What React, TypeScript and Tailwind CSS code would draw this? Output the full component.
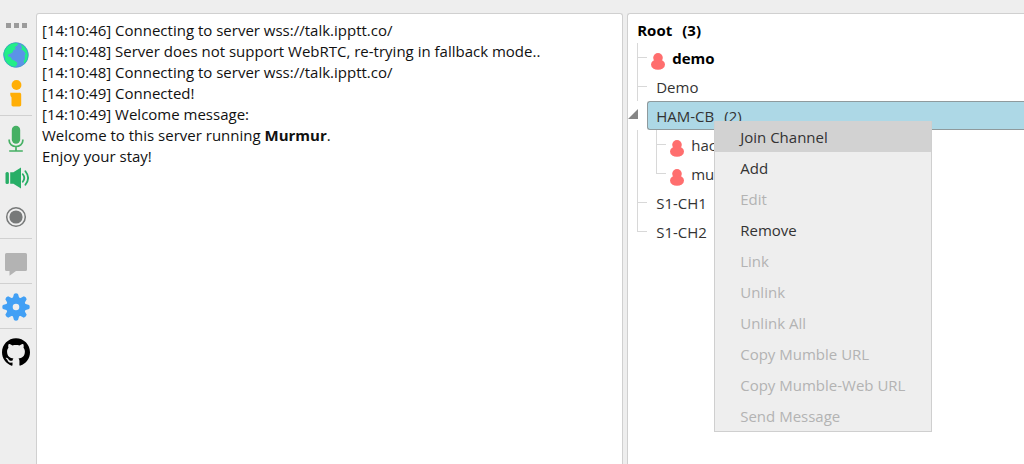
import type { ReactNode } from "react";
import clsx from "clsx";
import { SiGithub } from "react-icons/si";

/* ---------- icons ---------- */

function GlobeIcon() {
  return (
    <svg width="26" height="26" viewBox="0 0 26 26">
      <circle cx="13" cy="13" r="12.5" fill="#5b93e8" />
      <path
        d="M3.200 5.200C5.600 2.400 9 .8 12.500.7l3 .8-1.500 2.200-2.500 1.500 1.500 1.800-2.500 1-1 2.500-2.700 1.500-2 .7.500 1.800 2.500.8 1 2.200 3 1.200 2.700 2.300-1 2.500-2 1.700c-4-.5-7.500-3-9.300-6.200l-.2-3.500L.5 13C.6 10 1.500 7.300 3.200 5.200z"
        fill="#22ee88"
      />
      <path
        d="M17.500 2.200c3 1.200 5.300 3.600 6.600 6.600.9 2.400 1.200 5 .6 7.500-.6 2.200-1.700 4-3.200 5.500l-1-2.600 1.600-2.900-.6-2.500 1.200-2.200-2.200-2.800-2.400-1.200 1-2.400z"
        fill="#22ee88"
      />
      <circle cx="13" cy="13" r="12.300" fill="none" stroke="#3a9bc0" strokeWidth="0.600" />
    </svg>
  );
}

function InfoIcon() {
  return (
    <svg width="12" height="27" viewBox="0 0 12 27" fill="#ffae06">
      <circle cx="6.500" cy="5" r="4.900" />
      <path d="M.3 12.700h9.200c1 0 1.700.7 1.700 1.700v10.400c0 1-.7 1.700-1.700 1.700H3.200c-1 0-1.700-.7-1.700-1.700v-7.600C.5 16.400.1 14.800.3 12.700z" />
    </svg>
  );
}

function MicIcon() {
  return (
    <svg width="16" height="28" viewBox="0 0 16 28">
      <rect x="3.800" y="0.800" width="8.400" height="18" rx="4.200" fill="#46b064" />
      <path d="M1.200 14.500v1.200a6.800 5.800 0 0 0 13.600 0v-1.200M8 21.500v4M1.200 26h13.600" fill="none" stroke="#46b064" strokeWidth="1.700" />
    </svg>
  );
}

function SpeakerIcon() {
  return (
    <svg width="26" height="22" viewBox="0 0 26 22">
      <rect x="2.500" y="5" width="3.400" height="12" rx="1.500" fill="#27ae66" />
      <path d="M7.200 5.200h3.200L18 .4v21.200l-7.600-4.800H7.200z" fill="#27ae66" />
      <path d="M19.800 7.200c1.800 2.300 1.800 5.300 0 7.600M22.400 4.200c3.400 4.300 3.400 9.300 0 13.600" fill="none" stroke="#27ae66" strokeWidth="1.800" strokeLinecap="round" />
    </svg>
  );
}

function RecordIcon() {
  return (
    <svg width="22" height="22" viewBox="0 0 22 22">
      <circle cx="11" cy="11" r="9.300" fill="none" stroke="#777979" strokeWidth="1.500" />
      <circle cx="11" cy="11" r="6.600" fill="#777979" />
    </svg>
  );
}

function CommentIcon() {
  return (
    <svg width="22" height="23" viewBox="0 0 22 23">
      <path d="M1.500 0h19a1.500 1.500 0 0 1 1.500 1.500v15a1.500 1.500 0 0 1-1.500 1.500H11l-6.500 4.700V18h-3A1.500 1.500 0 0 1 0 16.500v-15A1.500 1.500 0 0 1 1.500 0z" fill="#b3b3b3" />
    </svg>
  );
}

function GearIcon() {
  return (
    <svg width="28" height="28" viewBox="0 0 28 28">
      <g fill="#42a0f5">
        <path id="tooth" d="M10.500 6 12 .9Q14 -.3 16 .9L17.500 6z" />
        <use href="#tooth" transform="rotate(45 14 14)" />
        <use href="#tooth" transform="rotate(90 14 14)" />
        <use href="#tooth" transform="rotate(135 14 14)" />
        <use href="#tooth" transform="rotate(180 14 14)" />
        <use href="#tooth" transform="rotate(225 14 14)" />
        <use href="#tooth" transform="rotate(270 14 14)" />
        <use href="#tooth" transform="rotate(315 14 14)" />
      </g>
      <circle cx="14" cy="14" r="6.600" fill="none" stroke="#42a0f5" strokeWidth="6.600" />
    </svg>
  );
}

function UserIcon() {
  return (
    <svg width="14" height="17" viewBox="0 0 14 17" fill="#ff6e6e" className="shrink-0">
      <ellipse cx="7" cy="4.800" rx="4.800" ry="4.800" />
      <ellipse cx="7" cy="11.500" rx="7" ry="5.300" />
    </svg>
  );
}

/* ---------- toolbar ---------- */

function ToolButton({ label, children }: { label: string; children: ReactNode }) {
  return (
    <button type="button" aria-label={label} className="flex h-[39px] w-8 items-center justify-center">
      {children}
    </button>
  );
}

function Divider() {
  return <hr className="mt-[2px] mb-[3px] w-8 border-t border-[#d0d0d0]" />;
}

function Toolbar() {
  return (
    <nav aria-label="Toolbar" className="flex w-9 shrink-0 flex-col pt-[23px]">
      <div className="flex h-3 w-8 justify-center gap-[3px]">
        <span className="h-[5px] w-[5px] bg-[#9b9b9b]" />
        <span className="h-[5px] w-[5px] bg-[#9b9b9b]" />
        <span className="h-[5px] w-[5px] bg-[#9b9b9b]" />
      </div>
      <ToolButton label="Connect"><GlobeIcon /></ToolButton>
      <ToolButton label="Information"><InfoIcon /></ToolButton>
      <Divider />
      <ToolButton label="Mute"><MicIcon /></ToolButton>
      <ToolButton label="Deafen"><SpeakerIcon /></ToolButton>
      <ToolButton label="Record"><RecordIcon /></ToolButton>
      <Divider />
      <ToolButton label="Comment">
        <span className="pt-[6px]"><CommentIcon /></span>
      </ToolButton>
      <Divider />
      <ToolButton label="Settings"><GearIcon /></ToolButton>
      <Divider />
      <ToolButton label="Source code"><SiGithub size={28} color="#000" /></ToolButton>
    </nav>
  );
}

/* ---------- log ---------- */

const log = [
  { time: "14:10:46", text: "Connecting to server wss://talk.ipptt.co/" },
  { time: "14:10:48", text: "Server does not support WebRTC, re-trying in fallback mode.." },
  { time: "14:10:48", text: "Connecting to server wss://talk.ipptt.co/" },
  { time: "14:10:49", text: "Connected!" },
  { time: "14:10:49", text: "Welcome message:" },
];

function Log() {
  return (
    <section className="rounded-t-[3px] border border-b-0 border-[#d0d0d0] bg-white px-[5px] pt-[6px] leading-[21px]">
      {log.map((entry, i) => (
        <p key={i}>
          [{entry.time}] {entry.text}
        </p>
      ))}
      <p>
        Welcome to this server running <b>Murmur</b>.
      </p>
      <p>Enjoy your stay!</p>
    </section>
  );
}

/* ---------- context menu ---------- */

const menuItems = [
  { label: "Join Channel", enabled: true },
  { label: "Add", enabled: true },
  { label: "Edit", enabled: false },
  { label: "Remove", enabled: true },
  { label: "Link", enabled: false },
  { label: "Unlink", enabled: false },
  { label: "Unlink All", enabled: false },
  { label: "Copy Mumble URL", enabled: false },
  { label: "Copy Mumble-Web URL", enabled: false },
  { label: "Send Message", enabled: false },
];

function ContextMenu() {
  return (
    <ul role="menu" className="absolute top-[19px] left-[66px] z-10 w-[218px] border border-t-0 border-[#cfcfcf] bg-[#eeeeee]">
      {menuItems.map((item, i) => (
        <li key={item.label} role="none">
          <button
            type="button"
            role="menuitem"
            disabled={!item.enabled}
            className={clsx(
              "flex h-[31px] w-full items-center pt-[2px] pl-[25px] whitespace-nowrap",
              item.enabled ? "text-[#333]" : "text-[#b3b3b3]",
              i === 0 && "bg-[#d2d2d2]",
            )}
          >
            {item.label}
          </button>
        </li>
      ))}
    </ul>
  );
}

/* ---------- channel tree ---------- */

// Elbow that ties a node to the line of its parent
function Branch({ last }: { last?: boolean }) {
  return (
    <span className="flex w-[10px] shrink-0 flex-col">
      <span className="h-[15px] border-b border-l border-[#d8d8d8]" />
      {!last && <span className="flex-1 border-l border-[#d8d8d8]" />}
    </span>
  );
}

function Channel({ name, last }: { name: string; last?: boolean }) {
  return (
    <li role="treeitem" className="flex h-[29px] pl-[9px]">
      <Branch last={last} />
      <span className="pt-px pl-[9px] text-[#333]">{name}</span>
    </li>
  );
}

function User({ name, self, nested, last }: { name: string; self?: boolean; nested?: boolean; last?: boolean }) {
  return (
    <li role="treeitem" className="flex h-[29px] pl-[9px]">
      {nested && <span className="w-[19px] shrink-0 border-l border-[#d8d8d8]" />}
      <Branch last={last} />
      <span className="flex gap-[7px] pl-1">
        <span className="pt-[10px]"><UserIcon /></span>
        <span className={clsx("pt-px", self ? "font-bold text-black" : "text-[#333]")}>{name}</span>
      </span>
    </li>
  );
}

function ChannelTree() {
  return (
    <section className="rounded-tl-[3px] border border-r-0 border-b-0 border-[#d0d0d0] bg-white leading-[29px]">
      <div className="flex h-[29px] gap-[10px] pt-[2px] pl-[9px] font-bold text-black">
        <span>Root</span>
        <span>(3)</span>
      </div>
      <ul role="tree">
        <User name="demo" self />
        <Channel name="Demo" />
        <li role="treeitem" aria-expanded="true" aria-selected="true">
          <div className="flex h-[29px]">
            <span className="w-[19px] shrink-0 pt-2">
              <svg width="10" height="10" viewBox="0 0 10 10">
                <path d="M10 0v10H0z" fill="#868686" />
              </svg>
            </span>
            <div className="relative flex flex-1 gap-[10px] rounded-l-[3px] border border-r-0 border-[#8f9a9d] bg-[#add8e6] pl-2 text-[#333]">
              <span className="whitespace-nowrap">HAM-CB</span>
              <span>(2)</span>
              <ContextMenu />
            </div>
          </div>
          <ul role="group">
            <User name="hac" nested />
            <User name="mu" nested last />
          </ul>
        </li>
        <Channel name="S1-CH1" />
        <Channel name="S1-CH2" last />
      </ul>
    </section>
  );
}

export default function App() {
  return (
    <div className="flex min-h-screen bg-[#eeeeee] font-['Open_Sans','Noto_Sans',sans-serif] text-[15px] text-[#111]">
      <Toolbar />
      <main className="grid flex-1 grid-cols-[37fr_25fr] gap-1 pt-[13px]">
        <Log />
        <ChannelTree />
      </main>
    </div>
  );
}
